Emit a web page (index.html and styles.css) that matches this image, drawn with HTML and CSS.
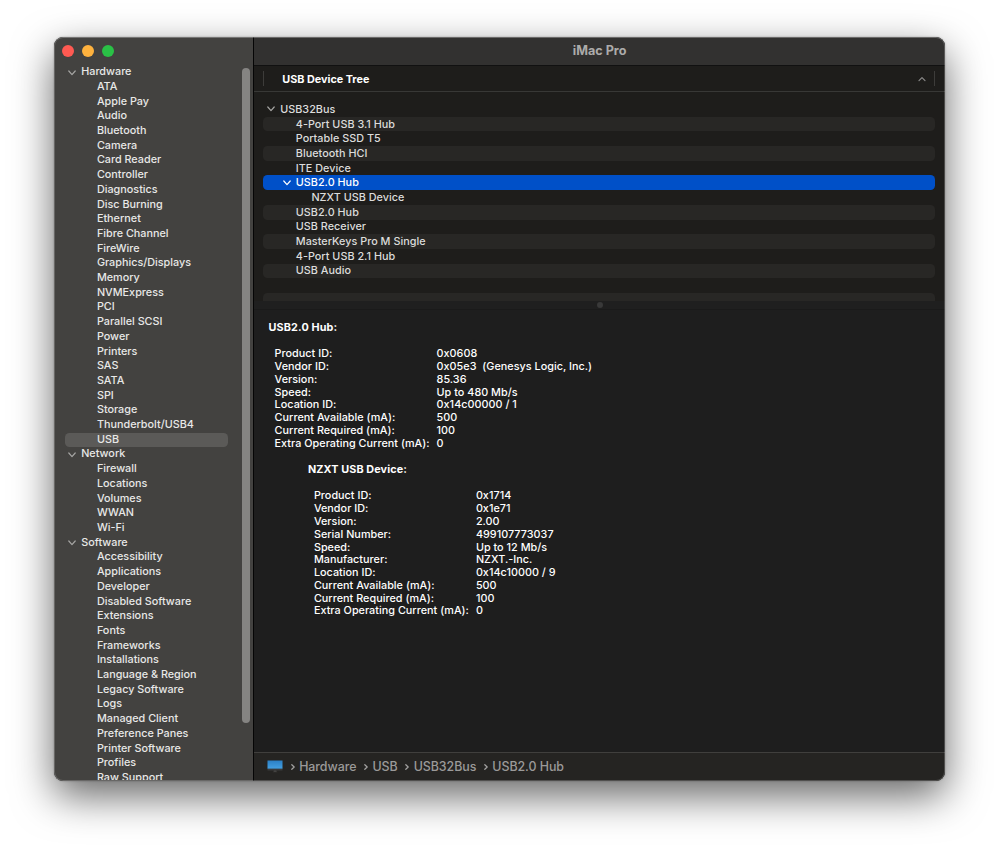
FILE: index.html
```
<!DOCTYPE html>
<html lang="en">
<head>
    <meta charset="UTF-8">
    <meta name="viewport" content="width=device-width, initial-scale=1.0">
    <title>iMac Pro</title>
    <link rel="stylesheet" href="styles.css">
</head>
<body>
    <div class="window">
        <aside class="sidebar">
            <div class="lights">
                <span class="light close"></span>
                <span class="light minimize"></span>
                <span class="light zoom"></span>
            </div>
            <nav class="categories">
                <h2><svg class="chevron" viewBox="0 0 8 6"><path d="M0.8 1 4 4.6 7.2 1"/></svg>Hardware</h2>
                <ul>
                    <li>ATA</li>
                    <li>Apple Pay</li>
                    <li>Audio</li>
                    <li>Bluetooth</li>
                    <li>Camera</li>
                    <li>Card Reader</li>
                    <li>Controller</li>
                    <li>Diagnostics</li>
                    <li>Disc Burning</li>
                    <li>Ethernet</li>
                    <li>Fibre Channel</li>
                    <li>FireWire</li>
                    <li>Graphics/Displays</li>
                    <li>Memory</li>
                    <li>NVMExpress</li>
                    <li>PCI</li>
                    <li>Parallel SCSI</li>
                    <li>Power</li>
                    <li>Printers</li>
                    <li>SAS</li>
                    <li>SATA</li>
                    <li>SPI</li>
                    <li>Storage</li>
                    <li>Thunderbolt/USB4</li>
                    <li class="active">USB</li>
                </ul>
                <h2><svg class="chevron" viewBox="0 0 8 6"><path d="M0.8 1 4 4.6 7.2 1"/></svg>Network</h2>
                <ul>
                    <li>Firewall</li>
                    <li>Locations</li>
                    <li>Volumes</li>
                    <li>WWAN</li>
                    <li>Wi-Fi</li>
                </ul>
                <h2><svg class="chevron" viewBox="0 0 8 6"><path d="M0.8 1 4 4.6 7.2 1"/></svg>Software</h2>
                <ul>
                    <li>Accessibility</li>
                    <li>Applications</li>
                    <li>Developer</li>
                    <li>Disabled Software</li>
                    <li>Extensions</li>
                    <li>Fonts</li>
                    <li>Frameworks</li>
                    <li>Installations</li>
                    <li>Language &amp; Region</li>
                    <li>Legacy Software</li>
                    <li>Logs</li>
                    <li>Managed Client</li>
                    <li>Preference Panes</li>
                    <li>Printer Software</li>
                    <li>Profiles</li>
                    <li>Raw Support</li>
                </ul>
            </nav>
            <div class="scrollbar"></div>
        </aside>

        <main class="main">
            <header class="titlebar">
                <h1>iMac Pro</h1>
            </header>
            <div class="tree-header">
                <span class="tree-title">USB Device Tree</span>
                <svg class="sort" viewBox="0 0 8 6"><path d="M1 4.6 4 1.6 7 4.6"/></svg>
            </div>
            <ul class="tree">
                <li class="root"><svg class="chevron" viewBox="0 0 8 6"><path d="M0.8 1 4 4.6 7.2 1"/></svg>USB32Bus</li>
                <li>4-Port USB 3.1 Hub</li>
                <li>Portable SSD T5</li>
                <li>Bluetooth HCI</li>
                <li>ITE Device</li>
                <li class="open selected"><svg class="chevron" viewBox="0 0 8 6"><path d="M0.8 1 4 4.6 7.2 1"/></svg>USB2.0 Hub</li>
                <li class="nested">NZXT USB Device</li>
                <li>USB2.0 Hub</li>
                <li>USB Receiver</li>
                <li>MasterKeys Pro M Single</li>
                <li>4-Port USB 2.1 Hub</li>
                <li>USB Audio</li>
                <li></li>
                <li></li>
            </ul>
            <div class="splitter"><span class="grip"></span></div>
            <section class="details">
                <h3>USB2.0 Hub:</h3>
                <dl>
                    <dt>Product ID:</dt><dd>0x0608</dd>
                    <dt>Vendor ID:</dt><dd>0x05e3&nbsp; (Genesys Logic, Inc.)</dd>
                    <dt>Version:</dt><dd>85.36</dd>
                    <dt>Speed:</dt><dd>Up to 480 Mb/s</dd>
                    <dt>Location ID:</dt><dd>0x14c00000 / 1</dd>
                    <dt>Current Available (mA):</dt><dd>500</dd>
                    <dt>Current Required (mA):</dt><dd>100</dd>
                    <dt>Extra Operating Current (mA):</dt><dd>0</dd>
                </dl>
                <div class="child">
                    <h3>NZXT USB Device:</h3>
                    <dl>
                        <dt>Product ID:</dt><dd>0x1714</dd>
                        <dt>Vendor ID:</dt><dd>0x1e71</dd>
                        <dt>Version:</dt><dd>2.00</dd>
                        <dt>Serial Number:</dt><dd>499107773037</dd>
                        <dt>Speed:</dt><dd>Up to 12 Mb/s</dd>
                        <dt>Manufacturer:</dt><dd>NZXT.-Inc.</dd>
                        <dt>Location ID:</dt><dd>0x14c10000 / 9</dd>
                        <dt>Current Available (mA):</dt><dd>500</dd>
                        <dt>Current Required (mA):</dt><dd>100</dd>
                        <dt>Extra Operating Current (mA):</dt><dd>0</dd>
                    </dl>
                </div>
            </section>
            <footer class="pathbar">
                <svg class="imac" viewBox="0 0 16 13">
                    <defs>
                        <linearGradient id="screen" x1="0" y1="0" x2="0" y2="1">
                            <stop offset="0" stop-color="#2b7fc4"/>
                            <stop offset="1" stop-color="#44a0e2"/>
                        </linearGradient>
                    </defs>
                    <rect x="0.5" y="0.5" width="15" height="8.3" fill="url(#screen)"/>
                    <rect x="0.5" y="8.8" width="15" height="1.7" fill="#3a3a3b"/>
                    <path d="M6.8 10.5h2.6l.3 1.4H6.5z" fill="#4b4a49"/>
                    <rect x="5.8" y="11.7" width="4.6" height="0.7" fill="#333231"/>
                </svg>
                <svg class="arrow" viewBox="0 0 4 6"><path d="M0.8 0.7 3.2 3 0.8 5.3"/></svg>
                <span>Hardware</span>
                <svg class="arrow" viewBox="0 0 4 6"><path d="M0.8 0.7 3.2 3 0.8 5.3"/></svg>
                <span>USB</span>
                <svg class="arrow" viewBox="0 0 4 6"><path d="M0.8 0.7 3.2 3 0.8 5.3"/></svg>
                <span>USB32Bus</span>
                <svg class="arrow" viewBox="0 0 4 6"><path d="M0.8 0.7 3.2 3 0.8 5.3"/></svg>
                <span>USB2.0 Hub</span>
            </footer>
        </main>
    </div>
</body>
</html>
```
FILE: styles.css
```
* {
    margin: 0;
    padding: 0;
    box-sizing: border-box;
}
body {
    width: 1000px;
    height: 853px;
    padding: 37px 54px 0 54.4px;
    overflow: hidden;
    background: #fff;
    font-family: Inter, "Liberation Sans", sans-serif;
    font-size: 10.8px;
    font-weight: 450;
    color: #e8e8e7;
}
ul {
    list-style: none;
}
svg {
    flex: none;
    fill: none;
    stroke-linecap: round;
    stroke-linejoin: round;
}

.window {
    position: relative;
    display: flex;
    width: 891px;
    height: 743.5px;
    border-radius: 9px;
    background: #1e1e1e;
    box-shadow: 0 15px 40px rgba(0, 0, 0, 0.6), 0 0 2px rgba(0, 0, 0, 0.3);
}
/* light rim drawn over the panes */
.window::after {
    content: "";
    position: absolute;
    inset: 0;
    border: 1px solid rgba(255, 255, 255, 0.2);
    border-top-color: rgba(255, 255, 255, 0.28);
    border-radius: 9px;
    pointer-events: none;
}

/* Sidebar */
.sidebar {
    position: relative;
    display: flex;
    flex-direction: column;
    width: 199.5px;
    padding-bottom: 1px;
    border-right: 1px solid #050505;
    border-radius: 9px 0 0 9px;
    background: #434240;
    overflow: hidden;
}
.lights {
    display: flex;
    flex: none;
    gap: 7.7px;
    height: 28.2px;
    padding: 8px 0 0 8px;
}
.light {
    width: 12px;
    height: 12px;
    border-radius: 50%;
}
.close {
    background: #ff5a52;
}
.minimize {
    background: #ffb23e;
}
.zoom {
    background: #2ac146;
}
.categories {
    flex: 1;
    min-height: 0;
    overflow: hidden;
}
.categories h2,
.categories li {
    height: 14.71px;
    line-height: 14.71px;
    font-size: inherit;
    font-weight: inherit;
    letter-spacing: 0.01px;
    white-space: nowrap;
}
.categories h2 {
    display: flex;
    align-items: center;
    padding-left: 14px;
}
.categories li {
    margin: 0 24.5px 0 10.5px;
    padding-left: 32px;
}
.categories .active {
    border-radius: 4.5px;
    background: #5b5a58;
}
.chevron {
    width: 8px;
    height: 6px;
    margin-right: 4.8px;
    stroke: #a5a4a2;
    stroke-width: 1.2;
}
.scrollbar {
    position: absolute;
    top: 30.5px;
    right: 3px;
    width: 8px;
    height: 655.5px;
    border-radius: 4px;
    background: #858482;
}

/* Right side */
.main {
    display: flex;
    flex: 1;
    flex-direction: column;
    min-width: 0;
    border-radius: 0 9px 9px 0;
    overflow: hidden;
}
.titlebar {
    display: flex;
    flex: none;
    align-items: center;
    justify-content: center;
    height: 29px;
    padding-bottom: 1.5px;
    border-bottom: 1px solid #111;
    background: #323130;
}
.titlebar h1 {
    font-size: 12.6px;
    font-weight: 700;
    color: #acabaa;
}
.tree-header {
    display: flex;
    flex: none;
    align-items: center;
    justify-content: space-between;
    height: 26px;
    padding: 0 10px 0 9px;
    border-bottom: 1px solid #383836;
    background: #1e1d1b;
}
.tree-header::before,
.tree-header::after {
    content: "";
    width: 1px;
    height: 15px;
    background: #3d3c3a;
}
.tree-title {
    flex: 1;
    padding: 1px 0 0 18.4px;
    font-weight: 700;
    color: #fff;
}
.sort {
    width: 8px;
    height: 6px;
    margin-right: 8px;
    stroke: #8b8a89;
    stroke-width: 1.2;
}
.tree {
    flex: none;
    height: 208.5px;
    padding: 10px 10px 0 9.5px;
    background: #1e1d1b;
    overflow: hidden;
}
.tree li {
    display: flex;
    align-items: center;
    height: 14.7px;
    padding-left: 32.4px;
    border-radius: 4.5px;
    letter-spacing: 0.03px;
    color: #dcdcdb;
}
.tree li:nth-child(even) {
    background: #282725;
}
.tree .root {
    padding-left: 4px;
}
.tree .open {
    padding-left: 19.6px;
}
.tree .nested {
    padding-left: 48px;
}
.tree .selected,
.tree .selected:nth-child(even) {
    background: #0050c8;
    color: #fff;
}
.selected .chevron {
    stroke: #fff;
}
.splitter {
    display: flex;
    flex: none;
    align-items: center;
    justify-content: center;
    height: 9px;
    border-bottom: 1px solid #1a1a1a;
    background: #1f1f1f;
}
.grip {
    width: 6px;
    height: 6px;
    border-radius: 50%;
    background: #393939;
}

/* Device details */
.details {
    flex: 1;
    padding: 12.6px 0 0 14.7px;
    line-height: 12.77px;
    letter-spacing: 0.03px;
    color: #fff;
}
.details h3 {
    font-size: inherit;
    font-weight: 700;
    letter-spacing: 0.12px;
}
.details dl {
    display: grid;
    grid-template-columns: 162px 1fr;
    padding: 13.5px 0 0 6px;
    white-space: nowrap;
}
.child {
    padding: 13.7px 0 0 39.3px;
}

.pathbar {
    display: flex;
    flex: none;
    align-items: center;
    height: 28.5px;
    padding-left: 13.3px;
    border-top: 1px solid #403f3d;
    background: #252422;
    font-size: 12.4px;
    letter-spacing: -0.04px;
    color: #9b9a99;
}
.imac {
    width: 16px;
    height: 13px;
}
.arrow {
    width: 4px;
    height: 6px;
    margin: 1px 4.4px 0 7.6px;
    stroke: #a3a2a1;
    stroke-width: 1.2;
}
```
